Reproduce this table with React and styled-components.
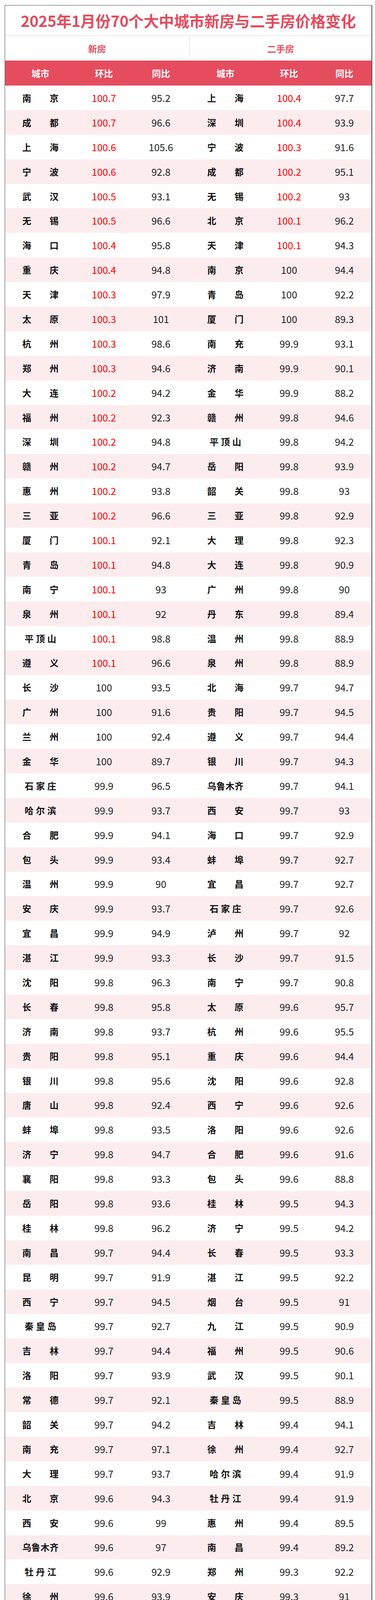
import styled, { createGlobalStyle } from "styled-components";

const GlobalStyle = createGlobalStyle`
  body {
    margin: 0;
    background: #fff;
    font-family: "Noto Sans CJK SC", "Liberation Sans", sans-serif;
  }
`;

const COLS = "181px 144px 148px 182px 144px 139px";

const RAW = `
南京 100.7 95.2 上海 100.4 97.7
成都 100.7 96.6 深圳 100.4 93.9
上海 100.6 105.6 宁波 100.3 91.6
宁波 100.6 92.8 成都 100.2 95.1
武汉 100.5 93.1 无锡 100.2 93
无锡 100.5 96.6 北京 100.1 96.2
海口 100.4 95.8 天津 100.1 94.3
重庆 100.4 94.8 南京 100 94.4
天津 100.3 97.9 青岛 100 92.2
太原 100.3 101 厦门 100 89.3
杭州 100.3 98.6 南充 99.9 93.1
郑州 100.3 94.6 济南 99.9 90.1
大连 100.2 94.2 金华 99.9 88.2
福州 100.2 92.3 赣州 99.8 94.6
深圳 100.2 94.8 平顶山 99.8 94.2
赣州 100.2 94.7 岳阳 99.8 93.9
惠州 100.2 93.8 韶关 99.8 93
三亚 100.2 96.6 三亚 99.8 92.9
厦门 100.1 92.1 大理 99.8 92.3
青岛 100.1 94.8 大连 99.8 90.9
南宁 100.1 93 广州 99.8 90
泉州 100.1 92 丹东 99.8 89.4
平顶山 100.1 98.8 温州 99.8 88.9
遵义 100.1 96.6 泉州 99.8 88.9
长沙 100 93.5 北海 99.7 94.7
广州 100 91.6 贵阳 99.7 94.5
兰州 100 92.4 遵义 99.7 94.4
金华 100 89.7 银川 99.7 94.3
石家庄 99.9 96.5 乌鲁木齐 99.7 94.1
哈尔滨 99.9 93.7 西安 99.7 93
合肥 99.9 94.1 海口 99.7 92.9
包头 99.9 93.4 蚌埠 99.7 92.7
温州 99.9 90 宜昌 99.7 92.7
安庆 99.9 93.7 石家庄 99.7 92.6
宜昌 99.9 94.9 泸州 99.7 92
湛江 99.9 93.3 长沙 99.7 91.5
沈阳 99.8 96.3 南宁 99.7 90.8
长春 99.8 95.8 太原 99.6 95.7
济南 99.8 93.7 杭州 99.6 95.5
贵阳 99.8 95.1 重庆 99.6 94.4
银川 99.8 95.6 沈阳 99.6 92.8
唐山 99.8 92.4 西宁 99.6 92.6
蚌埠 99.8 93.5 洛阳 99.6 92.6
济宁 99.8 94.7 合肥 99.6 91.6
襄阳 99.8 93.3 包头 99.6 88.8
岳阳 99.8 93.6 桂林 99.5 94.3
桂林 99.8 96.2 济宁 99.5 94.2
南昌 99.7 94.4 长春 99.5 93.3
昆明 99.7 91.9 湛江 99.5 92.2
西宁 99.7 94.5 烟台 99.5 91
秦皇岛 99.7 92.7 九江 99.5 90.9
吉林 99.7 94.4 福州 99.5 90.6
洛阳 99.7 93.9 武汉 99.5 90.1
常德 99.7 92.1 秦皇岛 99.5 88.9
韶关 99.7 94.2 吉林 99.4 94.1
南充 99.7 97.1 徐州 99.4 92.7
大理 99.7 93.7 哈尔滨 99.4 91.9
北京 99.6 94.3 牡丹江 99.4 91.9
西安 99.6 99 惠州 99.4 89.5
乌鲁木齐 99.6 97 南昌 99.4 89.2
牡丹江 99.6 92.9 郑州 99.3 92.2
徐州 99.6 93.9 安庆 99.3 91
九江 99.6 92.3 兰州 99.3 90.7
烟台 99.6 94.1 常德 99.3 90.6
锦州 99.5 95.4 呼和浩特 99.3 88.6
扬州 99.5 93.7 唐山 99.3 88.5
泸州 99.5 92.2 昆明 99.2 93.1
呼和浩特 99.4 94.2 锦州 99.2 91.4
丹东 99.4 93.9 襄阳 99.2 89.9
北海 99.4 94.7 扬州 98.8 91.2
`;

const rows = RAW.trim()
  .split("\n")
  .map((line) => line.trim().split(/\s+/));

const Page = styled.div`
  padding: 13px 8px 14px 12px;
`;

const Sheet = styled.div`
  box-sizing: border-box;
  width: 940px;
  border: 1px solid #4a4a4a;
  box-shadow: 1px 1px 0 #4a4a4a;
  background: #fff;
`;

const Title = styled.h1`
  margin: 0;
  height: 76px;
  display: flex;
  align-items: center;
  justify-content: center;
  border-bottom: 2px solid #ececec;
  font-size: 39px;
  font-weight: 700;
  line-height: 1;
  color: #e24c5e;
  letter-spacing: -0.2px;
`;

const Groups = styled.div`
  display: grid;
  grid-template-columns: 473px 1fr;
  height: 63px;
`;

const GroupCell = styled.div`
  display: flex;
  align-items: center;
  justify-content: center;
  font-size: 23px;
  font-weight: 700;
  color: #e24d5f;
  border-right: ${(p) => (p.$divider ? "2px solid #ececec" : "none")};
`;

const HeadRow = styled.div`
  display: grid;
  grid-template-columns: ${COLS};
  height: 64px;
  background: #e54d5f;
`;

const HeadCell = styled.div`
  display: flex;
  align-items: center;
  justify-content: center;
  font-size: 23px;
  font-weight: 700;
  color: #fff;
`;

const Row = styled.div`
  display: grid;
  grid-template-columns: ${COLS};
  height: 62.9px;
  background: ${(p) => (p.$alt ? "#fdecee" : "#fff")};
`;

const Cell = styled.div`
  display: flex;
  align-items: center;
  justify-content: center;
`;

const CityName = styled.span`
  display: flex;
  justify-content: space-between;
  width: ${(p) => (p.$len === 3 ? "81px" : "93px")};
  font-size: 23px;
  font-weight: 700;
  line-height: 1;
  color: #111;
`;

const Num = styled.span`
  font-size: 25px;
  font-weight: 400;
  line-height: 1;
  color: ${(p) => (p.$hot ? "#ff0000" : "#222")};
`;

function City({ name }) {
  const chars = Array.from(name);
  return (
    <Cell>
      <CityName $len={chars.length}>
        {chars.map((c, i) => (
          <span key={i}>{c}</span>
        ))}
      </CityName>
    </Cell>
  );
}

function Half({ city, mom, yoy }) {
  return (
    <>
      <City name={city} />
      <Cell>
        <Num $hot={parseFloat(mom) > 100}>{mom}</Num>
      </Cell>
      <Cell>
        <Num>{yoy}</Num>
      </Cell>
    </>
  );
}

const HEADS = ["城市", "环比", "同比", "城市", "环比", "同比"];

export default function App() {
  return (
    <Page>
      <GlobalStyle />
      <Sheet>
        <Title>2025年1月份70个大中城市新房与二手房价格变化</Title>
        <Groups>
          <GroupCell $divider>新房</GroupCell>
          <GroupCell>二手房</GroupCell>
        </Groups>
        <HeadRow>
          {HEADS.map((h, i) => (
            <HeadCell key={i}>{h}</HeadCell>
          ))}
        </HeadRow>
        {rows.map((r, i) => (
          <Row key={i} $alt={i % 2 === 1}>
            <Half city={r[0]} mom={r[1]} yoy={r[2]} />
            <Half city={r[3]} mom={r[4]} yoy={r[5]} />
          </Row>
        ))}
      </Sheet>
    </Page>
  );
}
